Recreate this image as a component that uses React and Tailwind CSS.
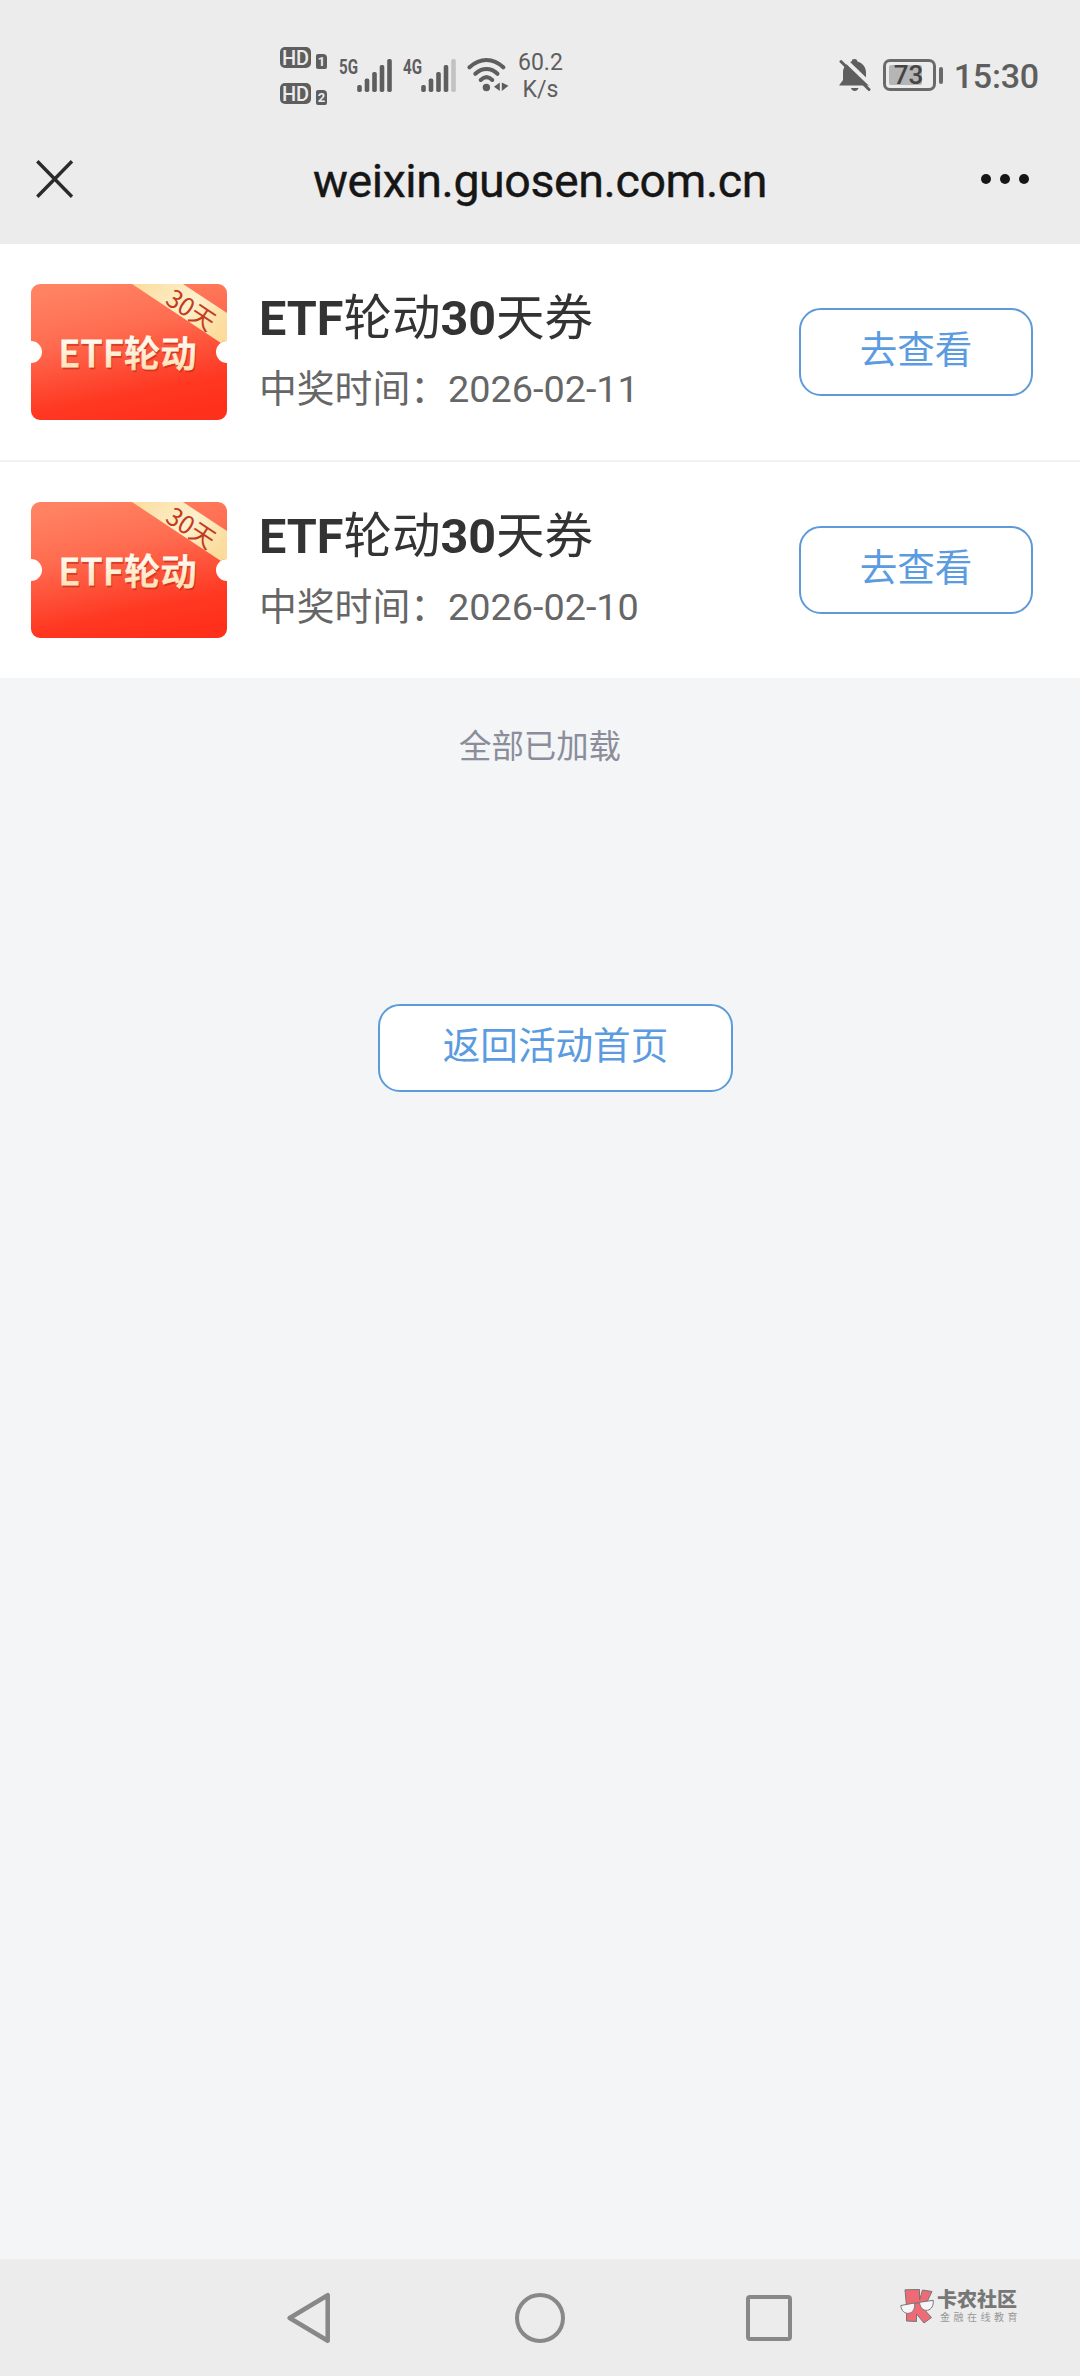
const prizes = [
  { id: 1, title: 'ETF轮动30天券', date: '2026-02-11' },
  { id: 2, title: 'ETF轮动30天券', date: '2026-02-10' },
]

const bars = [
  { x: 0, h: 7 },
  { x: 7.5, h: 13.5 },
  { x: 15, h: 20 },
  { x: 22.5, h: 27 },
  { x: 30, h: 33 },
]

function HdBadge({ n }) {
  return (
    <div className="flex h-[22px] items-end gap-[5px]">
      <span className="flex h-[21px] w-[31px] items-center justify-center self-start rounded-[5px] bg-[#5e5e5e] text-[20px] leading-none font-medium text-[#ececec]">
        HD
      </span>
      <span className="flex h-[15px] w-[11px] items-center justify-center rounded-[2px] rounded-tr-[4px] bg-[#5e5e5e] text-[13px] leading-none font-bold text-[#ececec]">
        {n}
      </span>
    </div>
  )
}

function Signal({ label, level }) {
  return (
    <div className="flex h-[34px]">
      <svg width="54" height="34" viewBox="0 0 54 34" className="overflow-visible">
        <text x="0" y="15.5" textLength="19" lengthAdjust="spacingAndGlyphs" fontSize="21" fontWeight="700" fill="#5e5e5e">
          {label}
        </text>
        {bars.map((b, i) => (
          <rect
            key={b.x}
            x={b.x + 18.2}
            y={34 - b.h}
            width="4.6"
            height={b.h}
            rx="1.8"
            fill={i < level ? '#5e5e5e' : '#c2c2c2'}
          />
        ))}
      </svg>
    </div>
  )
}

function Wifi() {
  return (
    <svg width="42" height="34" viewBox="0 0 42 34" fill="none" stroke="#5e5e5e" strokeWidth="4" strokeLinecap="round">
      <path d="M2.5 9.3C13 -.4 26 -.4 36.3 9.3" />
      <path d="M8.3 15.8C15 9.4 24 9.4 30.5 15.8" />
      <path d="M13.7 22C17.5 18.3 21.5 18.3 25.3 22" />
      <circle cx="19.4" cy="29.5" r="3.7" fill="#5e5e5e" stroke="none" />
      <path d="M32.8 24.5V33L27 28.8zM34.8 24.5V33L41.500 27.800z" fill="#5e5e5e" stroke="none" />
    </svg>
  )
}

function MutedBell() {
  return (
    <svg width="32" height="33" viewBox="0 0 32 33">
      <path
        d="M15.5 0a3 3 0 0 1 3 2.4C23.5 3.8 27 8 27 13.5V21l4 5.5H0L4 21v-7.5C4 8 7.5 3.8 12.5 2.4A3 3 0 0 1 15.5 0z"
        fill="#5e5e5e"
      />
      <path d="M12 29h7.5c-1 4-6.5 4-7.5 0z" fill="#5e5e5e" />
      <path d="M4.5 -.5L33.5 27.5" stroke="#ececec" strokeWidth="4" />
      <path d="M2 2.5L30 30.5" stroke="#5e5e5e" strokeWidth="3" strokeLinecap="round" />
    </svg>
  )
}

function Battery() {
  return (
    <div className="flex items-center gap-[3px]">
      <div className="flex h-[32px] w-[53px] items-center rounded-[7px] border-[3px] border-[#6a6a6a] p-[3px]">
        <div className="flex h-full w-[33px] items-center rounded-[2px] bg-[#b5b5b5]">
          <span className="ml-[5px] text-[26px] leading-none font-medium text-[#444]">73</span>
        </div>
      </div>
      <div className="h-[17px] w-[4px] rounded-[2px] bg-[#6a6a6a]" />
    </div>
  )
}

function StatusBar() {
  return (
    <div className="flex h-[130px] items-start pr-[41px] pl-[280px] text-[#5e5e5e]">
      <div className="mt-[47px] flex flex-col gap-[14px]">
        <HdBadge n="1" />
        <HdBadge n="2" />
      </div>
      <div className="mt-[58px] ml-[12px] flex">
        <Signal label="5G" level={5} />
        <div className="ml-[10px]">
          <Signal label="4G" level={4} />
        </div>
        <div className="ml-[10px]">
          <Wifi />
        </div>
      </div>
      <div className="mt-[49px] ml-[9px] text-center text-[23px] leading-[27px]">
        60.2
        <br />
        K/s
      </div>
      <div className="mt-[59px] ml-auto flex items-start">
        <MutedBell />
        <div className="ml-[12px]">
          <Battery />
        </div>
        <span className="ml-[11px] text-[34px] leading-[34px] font-medium tracking-[-0.2px]">15:30</span>
      </div>
    </div>
  )
}

function TitleBar() {
  return (
    <div className="grid h-[114px] grid-cols-[1fr_auto_1fr] items-start">
      <svg className="mt-[30px] ml-[36px]" width="38" height="38" viewBox="0 0 38 38" stroke="#2b2b2b" strokeWidth="3.4">
        <path d="M1.3 1.3L36 36.8M36 1.3L1.3 36.8" />
      </svg>
      <h1 className="mt-[23px] text-[46.5px] leading-[56px] tracking-[-0.4px] text-[#161616] [-webkit-text-stroke:0.4px_#161616]">
        weixin.guosen.com.cn
      </h1>
      <div className="mt-[44px] mr-[51px] flex gap-[9px] justify-self-end">
        <i className="size-[10px] rounded-full bg-[#161616]" />
        <i className="size-[10px] rounded-full bg-[#161616]" />
        <i className="size-[10px] rounded-full bg-[#161616]" />
      </div>
    </div>
  )
}

function Ticket({ id }) {
  return (
    <svg width="196" height="136" viewBox="0 0 196 136" className="overflow-visible font-['Noto_Sans_CJK_SC',sans-serif]">
      <defs>
        <linearGradient id={`bg${id}`} x1="0.3" y1="0" x2="0.6" y2="1">
          <stop offset="0" stopColor="#ff8262" />
          <stop offset="0.35" stopColor="#ff6c50" />
          <stop offset="0.6" stopColor="#fe4f37" />
          <stop offset="0.8" stopColor="#ff3822" />
          <stop offset="1" stopColor="#ff301b" />
        </linearGradient>
        <linearGradient id={`rb${id}`} x1="0" y1="0" x2="1" y2="0.6">
          <stop offset="0" stopColor="#fbdc9e" />
          <stop offset="0.6" stopColor="#fdf0cc" />
          <stop offset="1" stopColor="#fbdc9c" />
        </linearGradient>
        <linearGradient id={`tx${id}`} x1="0" y1="0" x2="0" y2="1">
          <stop offset="0.3" stopColor="#fffaf0" />
          <stop offset="1" stopColor="#ffdca8" />
        </linearGradient>
        <clipPath id={`cp${id}`}>
          <path d="M9 0H187a9 9 0 0 1 9 9V57a11 11 0 0 0 0 22V127a9 9 0 0 1 -9 9H9a9 9 0 0 1 -9 -9V79a11 11 0 0 0 0 -22V9a9 9 0 0 1 9 -9z" />
        </clipPath>
      </defs>
      <g clipPath={`url(#cp${id})`}>
        <rect width="196" height="136" fill={`url(#bg${id})`} />
        <path d="M101 0H152L196 29V63z" fill={`url(#rb${id})`} />
      </g>
      <text
        x="160"
        y="35"
        fontSize="25"
        fill="#c23a20"
        textAnchor="middle"
        transform="rotate(33.5 160 26)"
      >
        30天
      </text>
      <text x="28.5" y="84.5" fontSize="36" fontWeight="500" fill="#c8301c" fillOpacity="0.7" stroke="#c8301c" strokeOpacity="0.5" strokeWidth="0.8" textLength="138">
        ETF轮动
      </text>
      <text x="27.5" y="83" fontSize="36" fontWeight="500" fill={`url(#tx${id})`} stroke={`url(#tx${id})`} strokeWidth="0.8" textLength="138">
        ETF轮动
      </text>
    </svg>
  )
}

function PrizeRow({ prize }) {
  return (
    <li className="box-content flex h-[216px] items-start">
      <div className="mt-[40px] ml-[31px]">
        <Ticket id={prize.id} />
      </div>
      <div className="mt-[41px] ml-[32px] flex-1">
        <p className="text-[48.5px] leading-[68px] text-[#333]">
          <b>ETF</b>轮动<b>30</b>天券
        </p>
        <p className="mt-[9px] text-[37.8px] leading-[54px] text-[#666]">中奖时间：{prize.date}</p>
      </div>
      <button className="mt-[64px] mr-[47px] h-[88px] w-[234px] rounded-[22px] border-2 border-[#5f9ad8] pb-[2px] text-[37.6px] leading-none text-[#5b9be0]">
        去查看
      </button>
    </li>
  )
}

function NavBar() {
  return (
    <nav className="flex h-[117px] items-start bg-[#ececec] pl-[287px]">
      <svg className="mt-[33px]" width="44" height="52" viewBox="0 0 44 52" fill="none" stroke="#888" strokeWidth="4.5" strokeLinejoin="round">
        <path d="M40.7 3.2V48.8L2.7 26z" />
      </svg>
      <div className="mt-[34px] ml-[184px] size-[50px] rounded-full border-[4.5px] border-[#888]" />
      <div className="mt-[36px] ml-[181px] size-[46px] rounded-[4px] border-[4px] border-[#888]" />
      <div className="mt-[30px] ml-[108px] flex items-start gap-[3px]">
        <svg width="34" height="35" viewBox="0 0 34 35" stroke="#777" strokeWidth="1">
          <path d="M5 .8L19.500 .5V11L22.500 1 32 2.500 25.500 16 22 18 31.500 28.500 24 34 16.500 25V32.500L6.500 32V17z" fill="#ee6a74" />
          <path d="M.8 16.500L14.500 14C15.500 19.500 13 23.500 9 24.300 4.500 25 1.300 21.500 .8 16.500zM19.500 13.300L33.200 11.300C33.800 16.500 31.500 20.500 27.500 21.300 23 22 20 18.500 19.500 13.300z" fill="#f7f5f5" />
          <path d="M14.500 14.500L19.500 13.500" />
        </svg>
        <div className="flex flex-col whitespace-nowrap">
          <span className="text-[20px] leading-[22px] font-black text-[#777]">卡农社区</span>
          <span className="ml-[3px] text-[10px] leading-[13px] tracking-[3.5px] text-[#999]">金融在线教育</span>
        </div>
      </div>
    </nav>
  )
}

export default function App() {
  return (
    <div className="flex h-[2376px] w-[1080px] flex-col overflow-hidden bg-[#f3f5f7] font-[Roboto,'Noto_Sans_CJK_SC',sans-serif]">
      <header className="h-[244px] shrink-0 bg-[#ececec]">
        <StatusBar />
        <TitleBar />
      </header>

      <main className="flex flex-1 flex-col">
        <ul className="divide-y-2 divide-[#f2f2f2] bg-white">
          {prizes.map((p) => (
            <PrizeRow key={p.id} prize={p} />
          ))}
        </ul>
        <p className="mt-[45px] text-center text-[32.4px] leading-[48px] text-[#8b8d9b]">全部已加载</p>
        <button className="mt-[233px] ml-[378px] h-[88px] w-[355px] rounded-[22px] border-2 border-[#5b9bdc] bg-white pb-[2px] text-[37.6px] leading-none text-[#5b9be0]">
          返回活动首页
        </button>
      </main>

      <NavBar />
    </div>
  )
}
